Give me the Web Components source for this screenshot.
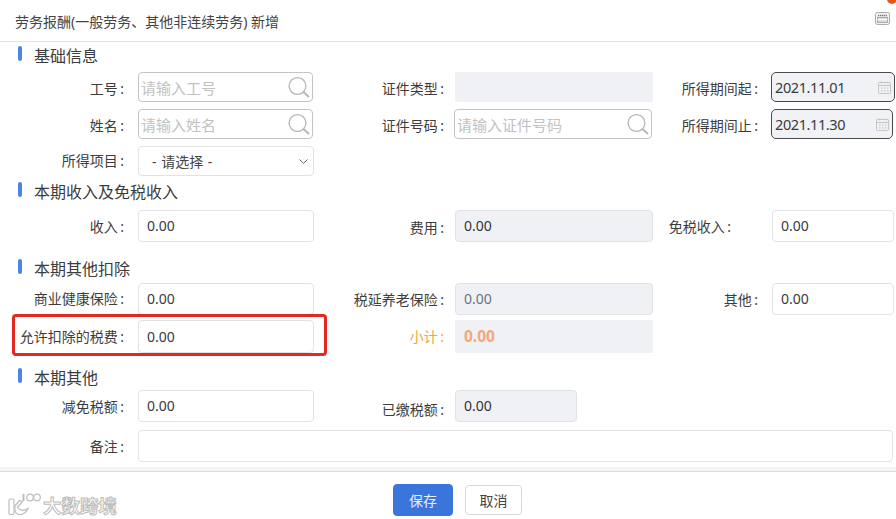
<!DOCTYPE html>
<html lang="zh">
<head>
<meta charset="utf-8">
<title>劳务报酬</title>
<style>
  html, body { margin: 0; height: 100%; background: #fff; overflow: hidden; }
  body { font-family: "Noto Sans", "Noto Sans CJK SC", sans-serif; color: #333; }
</style>
</head>
<body>
<form-dialog title-text="劳务报酬(一般劳务、其他非连续劳务) 新增">
  <form-section title-text="基础信息" style="margin-top:4px">
    <form-row style="margin-top:6px;height:30px">
      <form-field label="工号" kind="search" placeholder="请输入工号" style="--w:175px"></form-field>
      <form-field label="证件类型" kind="blank" style="--w:198px;--ml:1px"></form-field>
      <form-field label="所得期间起" kind="date" value="2021.11.01" style="--w:124px"></form-field>
    </form-row>
    <form-row style="margin-top:7px;height:30px">
      <form-field label="姓名" kind="search" placeholder="请输入姓名" style="--w:175px"></form-field>
      <form-field label="证件号码" kind="search" placeholder="请输入证件号码" style="--w:198px"></form-field>
      <form-field label="所得期间止" kind="date" value="2021.11.30" style="--w:122px"></form-field>
    </form-row>
    <form-row style="margin-top:7px;height:30px;--lt:0px;--lb:2px">
      <form-field label="所得项目" kind="select" value="- 请选择 -" style="--w:176px"></form-field>
    </form-row>
  </form-section>

  <form-section title-text="本期收入及免税收入" style="margin-top:6px">
    <form-row style="margin-top:8px;height:32px;--lt:0px;--vb:2px">
      <form-field label="收入" kind="text" value="0.00" style="--w:176px"></form-field>
      <form-field label="费用" kind="disabled" value="0.00" style="--w:198px;--ml:1px;--lt:2px"></form-field>
      <form-field label="免税收入" kind="text" value="0.00" style="--w:122px;--ml:1px;--lr:40px"></form-field>
    </form-row>
  </form-section>

  <form-section title-text="本期其他扣除" style="margin-top:17px">
    <form-row style="margin-top:4px;height:32px;--lt:0px;--vb:2px">
      <form-field label="商业健康保险" kind="text" value="0.00" style="--w:176px;--lb:2px"></form-field>
      <form-field label="税延养老保险" kind="disabled" value="0.00" style="--w:198px;--ml:1px;--vc:#6b7280"></form-field>
      <form-field label="其他" kind="text" value="0.00" style="--w:122px;--ml:1px"></form-field>
    </form-row>
    <form-row highlight style="margin-top:5px;height:33px;--lt:0px;--lb:2px">
      <form-field label="允许扣除的税费" kind="text" value="0.00" style="--w:176px"></form-field>
      <form-field label="小计" kind="total" value="0.00" style="--w:198px;--ml:1px;--vb:2px"></form-field>
    </form-row>
  </form-section>

  <form-section title-text="本期其他" style="margin-top:15px">
    <form-row style="margin-top:2px;height:32px;--lt:0px;--vb:2px">
      <form-field label="减免税额" kind="text" value="0.00" style="--w:176px"></form-field>
      <form-field label="已缴税额" kind="disabled" value="0.00" style="--w:122px;--ml:1px;--lt:6px"></form-field>
    </form-row>
    <form-row wide style="margin-top:8px;height:32px;--lt:0px">
      <form-field label="备注" kind="text" style="--w:755px"></form-field>
    </form-row>
  </form-section>

  <brand-mark slot="brand"></brand-mark>
  <form-button slot="actions" primary>保存</form-button>
  <form-button slot="actions">取消</form-button>
</form-dialog>

<script>
class FormDialog extends HTMLElement {
    constructor() {
        super();
        this._root = this.attachShadow({ mode: "open" });
        this._root.innerHTML = `
        <style>
            :host { display: flex; flex-direction: column; height: 519px; position: relative; overflow: hidden; }
            header {
                height: 41px;
                border-bottom: 1px solid #e4e4e4;
                display: flex;
                align-items: center;
                justify-content: space-between;
                padding: 0 6px 0 15px;
                font-size: 14px;
                color: #444;
                flex: none;
            }
            main { flex: none; height: 429px; }
            footer {
                flex: 1;
                background: #fff;
                border-top: 1px solid #dcdcdc;
                box-shadow: 0 -4px 0 #f3f3f3;
                display: flex;
                position: relative;
                justify-content: center;
                padding-top: 12px;
            }
            .actions { display: flex; gap: 12px; align-items: flex-start; margin-left: 19px; }
            .dot {
                position: absolute; top: -6px; right: -1px;
                width: 10px; height: 10px; border-radius: 50%;
                background: #e8541e;
            }
            svg { display: block; margin-top: -5px; }
        </style>
        <header>
            <span></span>
            <svg width="15" height="13" viewBox="0 0 15 13" fill="none">
                <rect x=".5" y=".5" width="14" height="12" rx="2" fill="#f4f4f4" stroke="#aaa"/>
                <path d="M3 3.5h9" stroke="#777" stroke-width="1.4" stroke-dasharray="1.4 .6"/>
                <rect x="2.5" y="5.5" width="10" height="5" fill="#dcdcdc" stroke="#999" stroke-width=".8"/>
                <path d="M2.5 7.5h10" stroke="#fff" stroke-width="1"/>
            </svg>
        </header>
        <div class="dot"></div>
        <main><slot></slot></main>
        <footer>
            <slot name="brand"></slot>
            <div class="actions"><slot name="actions"></slot></div>
        </footer>
        `;
        this._root.querySelector('header span').textContent = this.getAttribute('title-text');
    }
}

class FormSection extends HTMLElement {
    constructor() {
        super();
        this._root = this.attachShadow({ mode: "open" });
        this._root.innerHTML = `
        <style>
            :host { display: block; }
            .title {
                height: 20px;
                display: flex;
                align-items: center;
                padding-left: 18px;
                font-size: 16px;
                line-height: 20px;
                color: #3c3c3c;
            }
            .title i {
                width: 4px; height: 15px;
                border-radius: 2px;
                background: #4a86e8;
                margin-right: 12px;
                align-self: flex-start;
            }
        </style>
        <div class="title"><i></i><span></span></div>
        <slot></slot>
        `;
        this._root.querySelector('span').textContent = this.getAttribute('title-text');
    }
}

class FormRow extends HTMLElement {
    constructor() {
        super();
        this._root = this.attachShadow({ mode: "open" });
        const wide = this.hasAttribute('wide');
        this._root.innerHTML = `
        <style>
            :host {
                display: grid;
                grid-template-columns: ${wide ? '1fr' : '314px 339px 243px'};
                position: relative;
            }
            ::slotted(:nth-child(1)) { --lw: 138px; --lg: 14px; }
            ::slotted(:nth-child(2)) { --lw: 140px; --lg: 10px; }
            ::slotted(:nth-child(3)) { --lw: 118px; --lg: 13px; }
            .mark {
                position: absolute;
                left: 12px; top: -6px;
                box-sizing: border-box;
                width: 315px; height: 42px;
                border: 3px solid #e5281e;
                border-radius: 4px;
                pointer-events: none;
            }
        </style>
        <slot></slot>
        ${this.hasAttribute('highlight') ? '<div class="mark"></div>' : ''}
        `;
    }
}

class FormField extends HTMLElement {
    constructor() {
        super();
        this._root = this.attachShadow({ mode: "open" });
        this._root.innerHTML = `
        <style>
            :host {
                display: grid;
                grid-template-columns: var(--lw) auto;
                justify-content: start;
                height: 100%;
            }
            label {
                font-size: 14px;
                word-spacing: -1.2px;
                color: #3d3d3d;
                box-sizing: border-box;
                padding: var(--lt, 2px) var(--lr, var(--lg)) var(--lb, 0) 0;
                display: flex;
                align-items: center;
                justify-content: flex-end;
                white-space: nowrap;
            }
            .box {
                box-sizing: border-box;
                width: var(--w);
                margin-left: var(--ml, 0);
                height: 100%;
                display: flex;
                align-items: center;
                justify-content: space-between;
                padding: 0 8px;
                font-size: 14px;
                color: #3a3a3a;
                border: 1px solid #e2e2e2;
                border-radius: 4px;
                background: #fff;
                white-space: nowrap;
            }
            .txt { margin-bottom: var(--vb, 0); }
            .search { border-color: #c4c4c4; padding: 0 2px 0 2px; font-size: 15px; color: #c2c2c2; }
            .disabled { background: #f0f1f5; border-color: #e1e2e6; color: var(--vc, #333); }
            .blank { background: #f0f1f5; border-color: #f0f1f5; border-radius: 0; }
            .date { border-color: #4a4a4a; background: #f1f2f6; padding: 0 3px 0 3px; font-size: 14.5px; letter-spacing: -.4px; border-radius: 5px; }
            .select { padding: 0 5px 0 13px; font-size: 14px; word-spacing: 1px; color: #444; }
            .total { background: #f0f1f5; border-color: #f0f1f5; border-radius: 0; color: #f2a878; font-weight: 700; font-size: 15.5px; }
            :host([kind="total"]) label { color: #efa63f; }
            svg { display: block; flex: none; }
        </style>
        <label></label>
        <div class="box"><span class="txt"></span></div>
        `;
        this._$label = this._root.querySelector('label');
        this._$box = this._root.querySelector('.box');
        this._$txt = this._root.querySelector('.txt');
        this._render();
    }

    _render() {
        const kind = this.getAttribute('kind') || 'text';
        this._$label.textContent = this.getAttribute('label') + ' :';
        this._$box.classList.add(kind);
        this._$txt.textContent = this.getAttribute('value') || this.getAttribute('placeholder') || '';
        const iconos = {
            search: `<svg width="23" height="23" viewBox="0 0 23 23" fill="none" stroke="#b5b5b5" stroke-width="1.3"><circle cx="10.5" cy="10" r="8.4"/><path d="M16.5 16l5.5 5" stroke-width="1.8"/></svg>`,
            date: `<svg width="13" height="13" viewBox="0 0 13 13" fill="none" stroke="#c4c4c4"><rect x=".5" y="1.5" width="12" height="11" rx="1"/><path d="M.5 4.5h12M3 .5v2M10 .5v2"/><path d="M3 7h1.5M6 7h1.5M9 7h1.5M3 9.8h1.5M6 9.8h1.5M9 9.8h1.5" stroke-width="1.2"/></svg>`,
            select: `<svg width="9" height="5" viewBox="0 0 9 5" fill="none" stroke="#666"><path d="M.5.5l4 3.8 4-3.8"/></svg>`
        };
        if (iconos[kind]) this._$box.insertAdjacentHTML('beforeend', iconos[kind]);
    }
}

class FormButton extends HTMLElement {
    constructor() {
        super();
        this._root = this.attachShadow({ mode: "open" });
        this._root.innerHTML = `
        <style>
            :host {
                display: flex;
                align-items: center;
                justify-content: center;
                box-sizing: border-box;
                width: 57px;
                height: 30px;
                margin-top: 1px;
                font-size: 14px;
                color: #444;
                background: #fff;
                border: 1px solid #d9d9d9;
                border-radius: 4px;
            }
            :host([primary]) {
                width: 60px;
                height: 32px;
                margin-top: 0;
                background: #3a75dc;
                border-color: #3a75dc;
                color: #e8eefb;
            }
        </style>
        <slot></slot>
        `;
    }
}

class BrandMark extends HTMLElement {
    constructor() {
        super();
        this._root = this.attachShadow({ mode: "open" });
        this._root.innerHTML = `
        <style>
            :host {
                position: absolute; left: 8px; top: 19px;
                display: flex; align-items: center; gap: 2px;
            }
            span {
                font-size: 18.5px;
                font-weight: 700;
                color: #fff;
                -webkit-text-stroke: 1px #bdbdbd;
                line-height: 24px;
                margin-top: 3px;
            }
        </style>
        <svg width="33" height="24" viewBox="0 0 33 24" fill="#fff" stroke="#bdbdbd" stroke-width="1.2">
            <path d="M1 7.5c0-1 .6-1.5 1.5-1.5h2c1 0 1.5.6 1.5 1.5V20c0 1-.6 1.5-1.5 1.5h-2C1.600 21.500 1 21 1 20z"/>
            <path d="M7 13l4.500-5.500 3 1L9.500 14c1.500 3.500 6.500 4.500 10.500 1.500-2 5-7 7-10.500 5.500-2-1-3-3-2.500-8z"/>
            <path d="M15.500 1v7" fill="none" stroke-width="2"/>
            <circle cx="22" cy="4.500" r="3.300" fill="none"/>
            <circle cx="29" cy="4.500" r="3.300" fill="none"/>
        </svg>
        <span>大数跨境</span>
        `;
    }
}

window.customElements.define('form-dialog', FormDialog);
window.customElements.define('form-section', FormSection);
window.customElements.define('form-row', FormRow);
window.customElements.define('form-field', FormField);
window.customElements.define('form-button', FormButton);
window.customElements.define('brand-mark', BrandMark);
</script>
</body>
</html>
